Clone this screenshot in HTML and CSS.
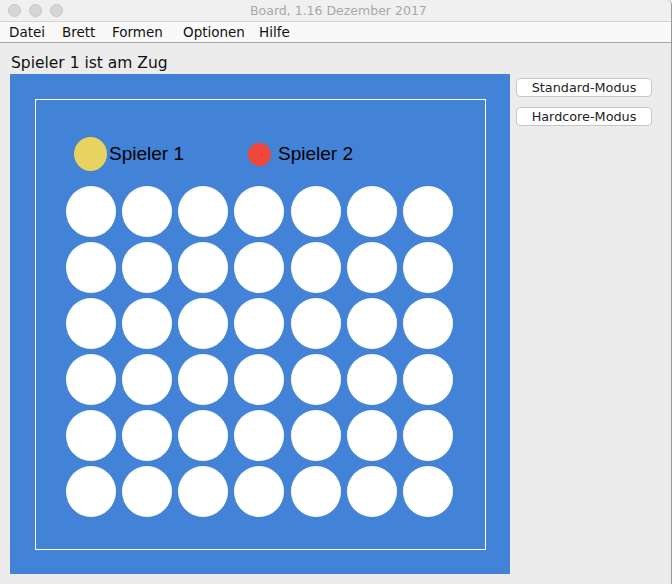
FILE: index.html
```html
<!DOCTYPE html>
<html lang="de">
<head>
<meta charset="utf-8">
<title>Board</title>
<link rel="stylesheet" href="styles.css">
</head>
<body>
<div class="window">
  <div class="titlebar">
    <div class="lights"><span class="light"></span><span class="light"></span><span class="light"></span></div>
    <div class="title">Board, 1.16 Dezember 2017</div>
  </div>
  <div class="menubar">
    <span class="menu m-datei">Datei</span>
    <span class="menu m-brett">Brett</span>
    <span class="menu m-formen">Formen</span>
    <span class="menu m-optionen">Optionen</span>
    <span class="menu m-hilfe">Hilfe</span>
  </div>
  <div class="content">
    <div class="left">
      <div class="status">Spieler 1 ist am Zug</div>
      <div class="board">
        <div class="frame">
          <div class="legend">
            <div class="legend-item item1"><span class="chip yellow"></span><span class="pname">Spieler 1</span></div>
            <div class="legend-item item2"><span class="chip red"></span><span class="pname">Spieler 2</span></div>
          </div>
          <div class="grid">
            <span class="hole"></span><span class="hole"></span><span class="hole"></span><span class="hole"></span><span class="hole"></span><span class="hole"></span><span class="hole"></span>
            <span class="hole"></span><span class="hole"></span><span class="hole"></span><span class="hole"></span><span class="hole"></span><span class="hole"></span><span class="hole"></span>
            <span class="hole"></span><span class="hole"></span><span class="hole"></span><span class="hole"></span><span class="hole"></span><span class="hole"></span><span class="hole"></span>
            <span class="hole"></span><span class="hole"></span><span class="hole"></span><span class="hole"></span><span class="hole"></span><span class="hole"></span><span class="hole"></span>
            <span class="hole"></span><span class="hole"></span><span class="hole"></span><span class="hole"></span><span class="hole"></span><span class="hole"></span><span class="hole"></span>
            <span class="hole"></span><span class="hole"></span><span class="hole"></span><span class="hole"></span><span class="hole"></span><span class="hole"></span><span class="hole"></span>
          </div>
        </div>
      </div>
    </div>
    <div class="right">
      <button class="btn">Standard-Modus</button>
      <button class="btn">Hardcore-Modus</button>
    </div>
  </div>
</div>
</body>
</html>
```
FILE: styles.css
```css
html, body {
  margin: 0;
  padding: 0;
  background: #ececec;
}
body {
  width: 672px;
  height: 584px;
  overflow: hidden;
  font-family: "DejaVu Sans", sans-serif;
}
.window {
  width: 671px;
  height: 584px;
  border-right: 1px solid #9a9a9a;
  border-top-right-radius: 5px;
  background: #ececec;
}
.titlebar {
  height: 21px;
  background: #f0f0f0;
  border-bottom: 1px solid #d3d3d3;
  display: flex;
  align-items: center;
  border-top-right-radius: 5px;
}
.lights {
  display: flex;
  gap: 8px;
  padding-left: 8px;
  width: 120px;
}
.light {
  width: 11px;
  height: 11px;
  border-radius: 50%;
  background: #d6d6d6;
  border: 0.5px solid #c4c4c4;
}
.title {
  font-size: 12.5px;
  color: #a8a8a8;
  margin-left: 122px;
}
.menubar {
  height: 20px;
  background: #f9f9f9;
  border-bottom: 1px solid #a8a8a8;
  display: flex;
  align-items: center;
  padding-left: 9px;
  font-size: 13.5px;
  color: #111;
}
.menu { white-space: nowrap; }
.m-datei { width: 53px; }
.m-brett { width: 50px; }
.m-formen { width: 71px; }
.m-optionen { width: 76px; }
.content {
  display: flex;
  padding-left: 10px;
}
.left {
  width: 500px;
}
.status {
  height: 31px;
  box-sizing: border-box;
  padding-top: 11px;
  padding-left: 1px;
  font-size: 15.5px;
  color: #111;
  line-height: 18px;
}
.board {
  width: 500px;
  height: 500px;
  background: #4283d7;
  padding: 25px;
  box-sizing: border-box;
}
.frame {
  width: 451px;
  height: 451px;
  box-sizing: border-box;
  border: 1px solid #ffffff;
}
.legend {
  display: flex;
  align-items: center;
  height: 34px;
  margin-top: 37px;
  padding-left: 38px;
}
.legend-item {
  display: flex;
  align-items: center;
}
.item1 { width: 174px; }
.chip {
  display: block;
  border-radius: 50%;
}
.yellow {
  width: 33px;
  height: 34px;
  background: #e8d360;
  margin-right: 2px;
}
.red {
  width: 23px;
  height: 23px;
  background: #f0473a;
  margin-right: 7px;
}
.pname {
  font-family: "Liberation Sans", Arial, sans-serif;
  font-size: 19px;
  color: #000;
}
.grid {
  display: grid;
  grid-template-columns: repeat(7, 50px);
  grid-auto-rows: 51px;
  column-gap: 6.15px;
  row-gap: 5.1px;
  margin-top: 15px;
  margin-left: 30px;
}
.hole {
  display: block;
  border-radius: 50%;
  background: #ffffff;
}
.right {
  display: flex;
  flex-direction: column;
  gap: 10px;
  padding-top: 35px;
  padding-left: 6px;
}
.btn {
  width: 136px;
  height: 19px;
  margin: 0;
  padding: 0;
  background: #ffffff;
  border: 1px solid #c6c6c6;
  border-radius: 4px;
  font-family: "DejaVu Sans", sans-serif;
  font-size: 12.8px;
  color: #222;
  line-height: 17px;
}
```
